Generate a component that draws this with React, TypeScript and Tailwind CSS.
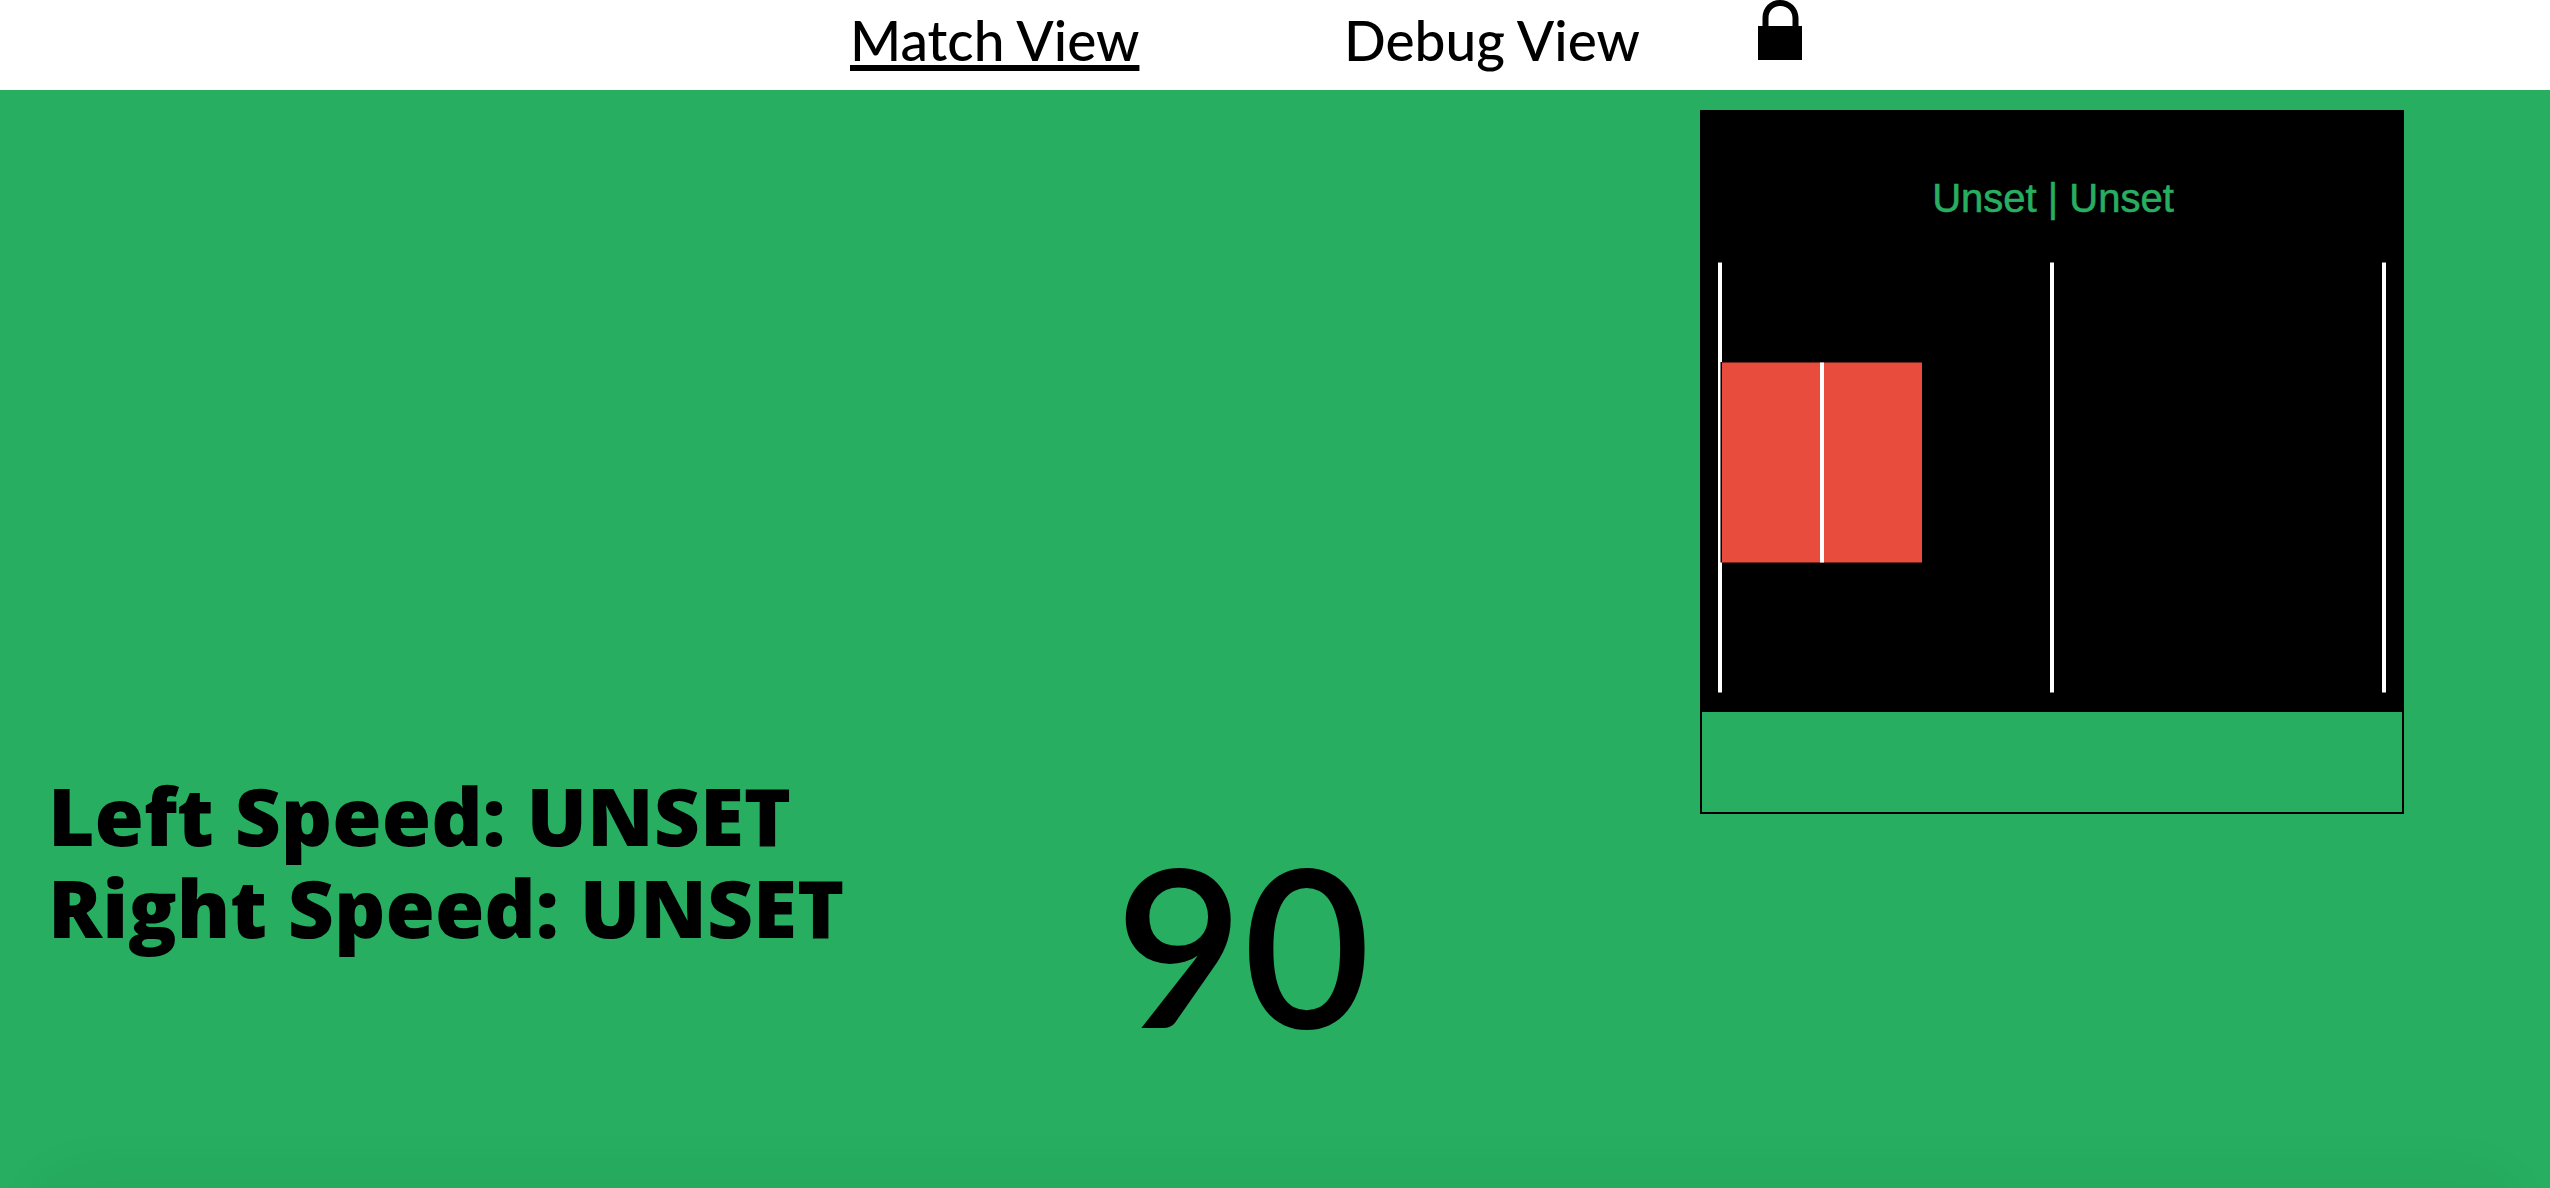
function LockIcon() {
  return (
    <svg className="h-[60px] w-11" viewBox="0 0 44 60" aria-hidden="true">
      <path d="M0 26H4.500V18C4.500 7.500 12 0 22 0S40.500 7.500 40.500 18V26H44V60H0ZM10.500 26H34.500V18C34.500 11 29.500 6 22.500 6S10.500 11 10.500 18Z" fill="#000" fillRule="evenodd" />
    </svg>
  );
}

function FieldView() {
  return (
    <div className="h-[704px] w-[704px] border-2 border-black">
      <svg className="block w-full" viewBox="0 0 700 600" role="img" aria-label="Field view">
        <rect width="700" height="600" fill="#000" />
        <text x="351" y="100" textAnchor="middle" fontSize="40" fill="#27ae60" stroke="#27ae60" strokeWidth="0.6" fontFamily='"Liberation Sans", Arial, sans-serif'>
          Unset | Unset
        </text>
        <g stroke="#fff" strokeWidth="4">
          <path d="M18 150.500V580.500M350 150.500V580.500M682 150.500V580.500" />
        </g>
        <rect x="18.500" y="250" width="202" height="200.500" fill="#000" />
        <rect x="20" y="250.500" width="200" height="200" fill="#e74c3c" />
        <path d="M120 250.500V450.500" stroke="#fff" strokeWidth="4" />
      </svg>
    </div>
  );
}

export default function App() {
  return (
    <div className="flex min-h-screen flex-col bg-[#27ae60] font-['Gill_Sans','Lato',sans-serif] text-black">
      <nav className="flex h-[90px] items-start justify-center bg-white pl-[102px]">
        <a href="#match" className="w-[494px] text-[55px] leading-[80px] font-medium">
          <span className="underline decoration-[6px] underline-offset-4 [text-decoration-skip-ink:none]">Match View</span>
        </a>
        <a href="#debug" className="w-[414px] text-[55px] leading-[80px] font-medium">
          Debug View
        </a>
        <button type="button" aria-label="Lock">
          <LockIcon />
        </button>
      </nav>
      <main className="relative grid flex-1 grid-cols-3 items-start overflow-hidden pt-5">
        <section className="pt-[659px] pl-12 font-['Gill_Sans','Open_Sans',sans-serif] text-[80px] leading-[92px] font-extrabold whitespace-nowrap">
          <p>Left Speed: UNSET</p>
          <p>Right Speed: UNSET</p>
        </section>
        <p className="pt-[708px] pr-16 text-center text-[220px] leading-[250px] font-semibold">90</p>
        <FieldView />
        <div className="absolute inset-x-12 -bottom-20 h-20 rounded-lg shadow-[0_0_72px_rgba(0,0,0,0.06)]" />
      </main>
    </div>
  );
}
